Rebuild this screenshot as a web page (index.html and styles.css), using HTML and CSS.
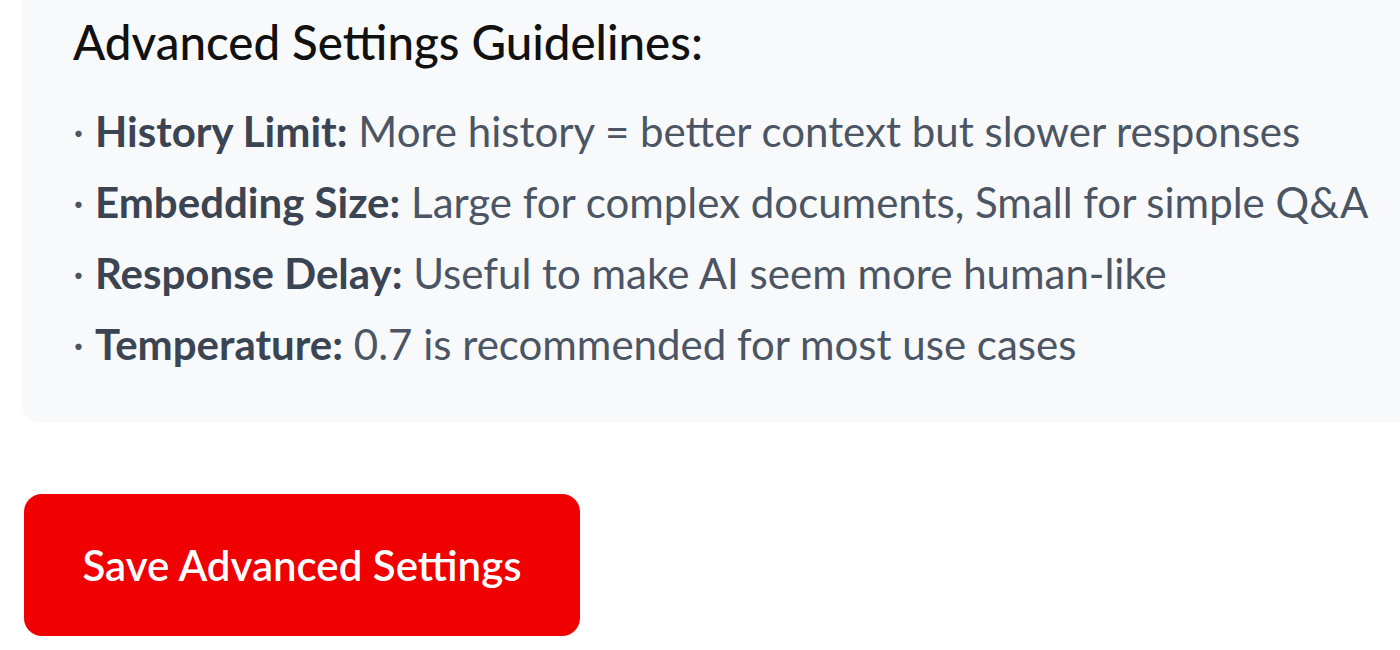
FILE: index.html
```html
<!DOCTYPE html>
<html lang="en">
<head>
    <meta charset="UTF-8">
    <meta name="viewport" content="width=device-width, initial-scale=1.0">
    <title>Advanced Settings</title>
    <link rel="stylesheet" href="styles.css">
</head>
<body>

<div class="page">
    <div class="guidelines">
        <h3>Advanced Settings Guidelines:</h3>
        <ul>
            <li><span class="dot">·</span><strong>History Limit:</strong> More history = better context but slower responses</li>
            <li><span class="dot">·</span><strong>Embedding Size:</strong> Large for complex documents, Small for simple Q&amp;A</li>
            <li><span class="dot">·</span><strong>Response Delay:</strong> Useful to make AI seem more human-like</li>
            <li><span class="dot">·</span><strong>Temperature:</strong> 0.7 is recommended for most use cases</li>
        </ul>
    </div>

    <button class="save-btn">Save Advanced Settings</button>
</div>

</body>
</html>
```

FILE: styles.css
```css
body {
    margin: 0;
    padding: 0;
    background-color: #ffffff;
    font-family: Lato, "Noto Sans", sans-serif;
    overflow: hidden;
}
.page {
    padding-left: 22px;
}
.guidelines {
    background-color: #f8f9fb;
    border-bottom-left-radius: 20px;
    box-shadow: 0 1px 3px rgba(0, 0, 0, 0.05);
    padding: 13px 0 41px 51px;
}
.guidelines h3 {
    margin: 0;
    font-size: 47.5px;
    font-weight: 500;
    line-height: 1.2;
    color: #111111;
}
.guidelines ul {
    list-style: none;
    margin: 26px 0 0;
    padding: 0;
}
.guidelines li {
    font-size: 42px;
    line-height: 71px;
    color: #4b5563;
    white-space: nowrap;
}
.guidelines li strong {
    color: #3b4452;
    font-weight: 700;
}
.dot {
    display: inline-block;
    width: 22px;
    color: #4b5563;
}
.save-btn {
    display: block;
    margin: 73px 0 0 2px;
    width: 556px;
    height: 142px;
    padding: 0;
    border: none;
    border-radius: 18px;
    background-color: #f00000;
    color: #ffffff;
    font-family: Lato, "Noto Sans", sans-serif;
    font-size: 42px;
    font-weight: 600;
    cursor: pointer;
}
```
